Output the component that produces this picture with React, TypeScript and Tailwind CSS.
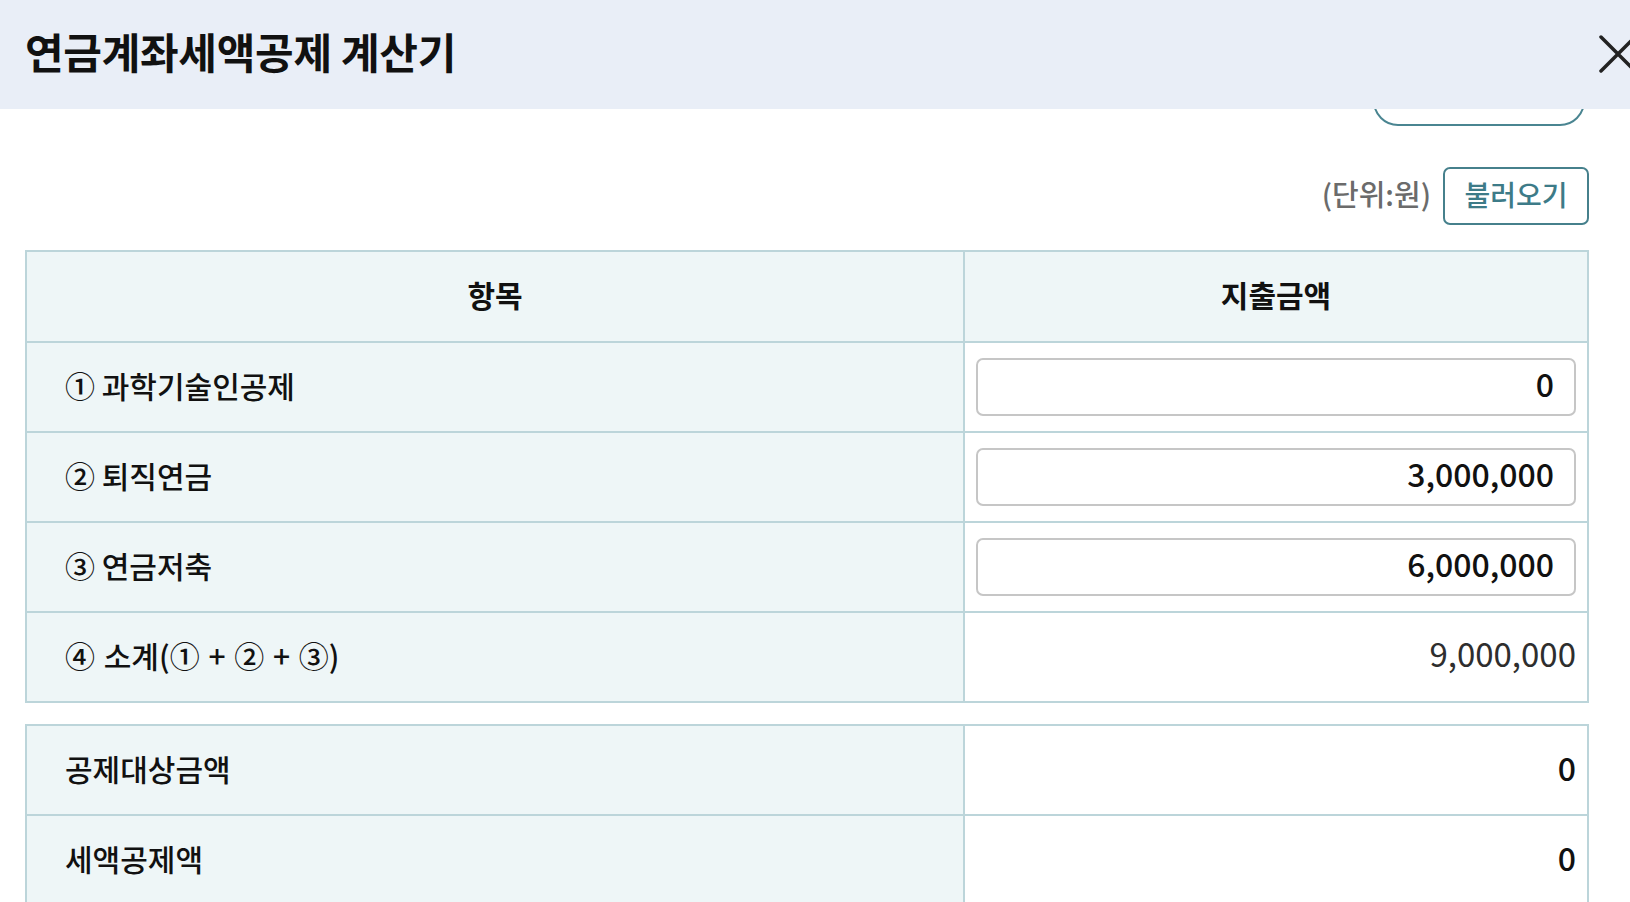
import React from "react";

const font = { fontFamily: '"Noto Sans CJK KR", "Noto Sans", sans-serif' };

const labelCls =
  "border-2 border-[#bcd5da] bg-[#eef6f7] pl-[38px] pb-[4px] text-[30px] font-medium text-[#111] w-[938px]";

function Row({ label, children, right, wide }: { label: string; children?: React.ReactNode; right?: string; wide?: boolean }) {
  return (
    <tr className="h-[90px]">
      <td className={labelCls}>
        <span className={wide ? "[word-spacing:2px]" : ""}>{label}</span>
      </td>
      <td className="border-2 border-[#bcd5da] bg-white px-[11px] text-right">
        {children}
        {right !== undefined && <span className="block pb-[6px] text-[33px] text-[#2e2e2e]">{right}</span>}
      </td>
    </tr>
  );
}

function Input({ value }: { value: string }) {
  return (
    <input
      readOnly
      value={value}
      className="block w-full h-[58px] border-2 border-[#c6c6c6] rounded-[7px] bg-white text-right pr-[20px] pb-[8px] text-[32px] font-medium text-[#111] outline-none"
      style={font}
    />
  );
}

export default function App() {
  return (
    <div className="w-[1630px] h-[902px] overflow-hidden bg-white" style={font}>
      <div className="h-[109px] bg-[#e9eef7] flex items-center justify-between pl-[25px] pb-[8px]">
        <h1 className="text-[42px] font-bold text-[#111] tracking-[-0.3px]">연금계좌세액공제 계산기</h1>
        <svg width="40" height="40" viewBox="0 0 40 40" className="-mr-[8px] mt-[6px]">
          <path d="M3 3 L37 37 M37 3 L3 37" stroke="#222" strokeWidth="3.5" strokeLinecap="round" />
        </svg>
      </div>
      <div className="h-[17px] overflow-hidden flex justify-end pr-[45px]">
        <div className="w-[212px] h-[50px] -mt-[33px] rounded-full border-2 border-[#4a8591]" />
      </div>
      <div className="flex justify-end items-center gap-[12px] pr-[41px] mt-[41px]">
        <span className="text-[29px] font-medium text-[#6b6b6b] pb-[4px]">(단위:원)</span>
        <button className="w-[146px] h-[58px] rounded-[7px] border-2 border-[#46808c] text-[28px] font-medium text-[#3d7b88] pb-[4px]">
          불러오기
        </button>
      </div>
      <div className="pl-[25px] pr-[41px] mt-[25px]">
        <table className="w-full border-collapse">
          <tbody>
            <tr className="h-[91px]">
              <th className="border-2 border-[#bcd5da] bg-[#eef6f7] pb-[4px] text-[30px] font-bold text-[#111] w-[938px]">항목</th>
              <th className="border-2 border-[#bcd5da] bg-[#eef6f7] pb-[4px] text-[30px] font-bold text-[#111]">지출금액</th>
            </tr>
            <Row label="① 과학기술인공제">
              <Input value="0" />
            </Row>
            <Row label="② 퇴직연금">
              <Input value="3,000,000" />
            </Row>
            <Row label="③ 연금저축">
              <Input value="6,000,000" />
            </Row>
            <Row label="④ 소계(① + ② + ③)" right="9,000,000" wide />
          </tbody>
        </table>
        <table className="w-full border-collapse mt-[21px]">
          <tbody>
            <tr className="h-[90px]">
              <td className={labelCls}>공제대상금액</td>
              <td className="border-2 border-[#bcd5da] bg-white px-[11px] pb-[6px] text-right text-[32px] font-medium text-[#111]">0</td>
            </tr>
            <tr className="h-[90px]">
              <td className={labelCls}>세액공제액</td>
              <td className="border-2 border-[#bcd5da] bg-white px-[11px] pb-[6px] text-right text-[32px] font-medium text-[#111]">0</td>
            </tr>
          </tbody>
        </table>
      </div>
    </div>
  );
}
